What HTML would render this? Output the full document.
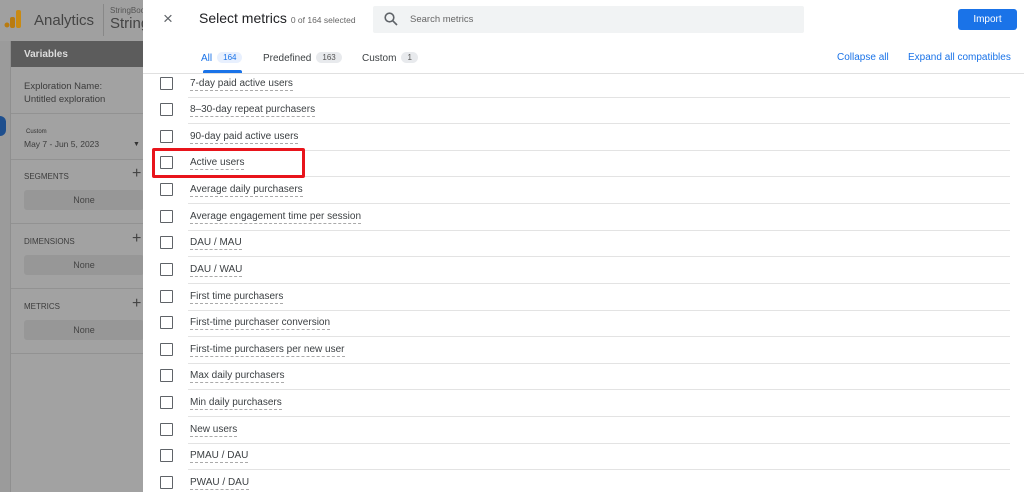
<!DOCTYPE html><html><head><style>
*{box-sizing:border-box;margin:0;padding:0}
html,body{width:1024px;height:492px;overflow:hidden}
body{position:relative;font-family:"Liberation Sans",sans-serif;background:#9b9b9b}
.a{position:absolute;white-space:nowrap}
.side{position:absolute;left:10px;top:41px;width:133px;height:451px;background:#a2a2a2;border-left:1px solid #8f8f8f}
.lt{font-size:9px;color:#3c3c3c}
.none{position:absolute;left:13px;width:120px;height:20px;background:#979797;border-radius:3px;font-size:9px;color:#444;text-align:center;line-height:20px}
.panel{position:absolute;left:143px;top:0;width:881px;height:492px;background:#fff;overflow:hidden}
.row{position:absolute;left:0;width:881px;height:27px}
.cb{position:absolute;left:17px;top:6px;width:13px;height:13px;border:1.5px solid #5f6368;border-radius:1px}
.rt{position:absolute;left:47px;top:6px;font-size:10px;color:#3c4043;border-bottom:1px dashed #aaa;line-height:13px;padding-bottom:0}
.ln{position:absolute;left:45px;right:14px;bottom:0;border-bottom:1px solid #e3e3e3}
.pill{display:inline-block;background:#e8eaed;border-radius:8px;font-size:8px;padding:1px 6px;margin-left:5px;color:#555;vertical-align:1px}
</style></head><body>
<div class="a" style="left:0;top:0;width:143px;height:41px;background:#a0a0a0"></div>
<svg class="a" style="left:3px;top:9px" width="20" height="20"><rect x="13" y="1" width="5" height="18" rx="2" fill="#c98a12"/><rect x="7" y="8" width="5" height="11" rx="2" fill="#b97b10"/><circle cx="4" cy="16" r="2.5" fill="#b97b10"/></svg>
<div class="a" style="left:34px;top:12px;font-size:15px;color:#444">Analytics</div>
<div class="a" style="left:103px;top:4px;height:32px;border-left:1px solid #888"></div>
<div class="a" style="left:110px;top:6px;font-size:8px;color:#555">StringBoo</div>
<div class="a" style="left:110px;top:15px;font-size:15px;color:#444">String</div>
<div class="a" style="left:-6px;top:116px;width:12px;height:20px;border-radius:6px;background:#1e4f8e"></div>
<div class="side">
<div class="a" style="left:0;top:0;width:133px;height:26px;background:#5c5c5c"></div>
<div class="a" style="left:13px;top:8px;font-size:10px;color:#ddd;font-weight:bold">Variables</div>
<div class="a lt" style="left:13px;top:40px;font-size:9.5px">Exploration Name:</div>
<div class="a lt" style="left:13px;top:53px;font-size:9.5px">Untitled exploration</div>
<div class="a" style="left:0;top:72px;width:133px;border-top:1px solid #929292"></div>
<div class="a" style="left:15px;top:88px;font-size:6px;color:#333">Custom</div>
<div class="a lt" style="left:13px;top:98px;font-size:8.5px">May 7 - Jun 5, 2023</div>
<div class="a" style="left:122px;top:100px;font-size:7px;color:#333">▼</div>
<div class="a" style="left:0;top:118px;width:133px;border-top:1px solid #929292"></div>
<div class="a lt" style="left:13px;top:131px;font-size:8px">SEGMENTS</div><div class="a" style="left:121px;top:124px;font-size:16px;color:#444">+</div>
<div class="none" style="top:149px">None</div>
<div class="a" style="left:0;top:182px;width:133px;border-top:1px solid #929292"></div>
<div class="a lt" style="left:13px;top:196px;font-size:8px">DIMENSIONS</div><div class="a" style="left:121px;top:189px;font-size:16px;color:#444">+</div>
<div class="none" style="top:214px">None</div>
<div class="a" style="left:0;top:247px;width:133px;border-top:1px solid #929292"></div>
<div class="a lt" style="left:13px;top:261px;font-size:8px">METRICS</div><div class="a" style="left:121px;top:254px;font-size:16px;color:#444">+</div>
<div class="none" style="top:279px">None</div>
<div class="a" style="left:0;top:312px;width:133px;border-top:1px solid #929292"></div>
</div>
<div class="panel">
<div class="a" style="left:20px;top:9px;font-size:17px;color:#5f6368">×</div>
<div class="a" style="left:56px;top:10px;font-size:14px;color:#202124">Select metrics <span style="font-size:8.5px;color:#666">0 of 164 selected</span></div>
<div class="a" style="left:230px;top:6px;width:431px;height:27px;background:#f1f3f4;border-radius:2px"></div>
<svg class="a" style="left:241px;top:12px" width="14" height="14"><circle cx="5.5" cy="5.5" r="4.3" fill="none" stroke="#5f6368" stroke-width="1.6"/><line x1="8.7" y1="8.7" x2="13" y2="13" stroke="#5f6368" stroke-width="1.6"/></svg>
<div class="a" style="left:267px;top:14px;font-size:9.5px;color:#666">Search metrics</div>
<div class="a" style="left:815px;top:9px;width:59px;height:21px;background:#1a73e8;border-radius:3px;color:#fff;font-size:10px;text-align:center;line-height:21px">Import</div>
<div class="a" style="left:58px;top:52px;font-size:10px;color:#1a73e8">All<span class="pill" style="background:#e8f0fe;color:#1a73e8">164</span></div>
<div class="a" style="left:60px;top:70px;width:39px;height:3px;background:#1a73e8;border-radius:2px 2px 0 0"></div>
<div class="a" style="left:120px;top:52px;font-size:10px;color:#3c4043">Predefined<span class="pill">163</span></div>
<div class="a" style="left:219px;top:52px;font-size:10px;color:#3c4043">Custom<span class="pill">1</span></div>
<div class="a" style="left:694px;top:52px;font-size:10px;color:#1a73e8">Collapse all</div>
<div class="a" style="left:765px;top:52px;font-size:10px;color:#1a73e8">Expand all compatibles</div>
<div class="a" style="left:0;top:73px;width:881px;border-top:1px solid #e0e0e0"></div>
<div class="row" style="top:71px"><div class="cb"></div><div class="rt">7-day paid active users</div><div class="ln"></div></div>
<div class="row" style="top:97px"><div class="cb"></div><div class="rt">8–30-day repeat purchasers</div><div class="ln"></div></div>
<div class="row" style="top:124px"><div class="cb"></div><div class="rt">90-day paid active users</div><div class="ln"></div></div>
<div class="row" style="top:150px"><div class="cb"></div><div class="rt">Active users</div><div class="ln"></div></div>
<div class="row" style="top:177px"><div class="cb"></div><div class="rt">Average daily purchasers</div><div class="ln"></div></div>
<div class="row" style="top:204px"><div class="cb"></div><div class="rt">Average engagement time per session</div><div class="ln"></div></div>
<div class="row" style="top:230px"><div class="cb"></div><div class="rt">DAU / MAU</div><div class="ln"></div></div>
<div class="row" style="top:257px"><div class="cb"></div><div class="rt">DAU / WAU</div><div class="ln"></div></div>
<div class="row" style="top:284px"><div class="cb"></div><div class="rt">First time purchasers</div><div class="ln"></div></div>
<div class="row" style="top:310px"><div class="cb"></div><div class="rt">First-time purchaser conversion</div><div class="ln"></div></div>
<div class="row" style="top:337px"><div class="cb"></div><div class="rt">First-time purchasers per new user</div><div class="ln"></div></div>
<div class="row" style="top:363px"><div class="cb"></div><div class="rt">Max daily purchasers</div><div class="ln"></div></div>
<div class="row" style="top:390px"><div class="cb"></div><div class="rt">Min daily purchasers</div><div class="ln"></div></div>
<div class="row" style="top:417px"><div class="cb"></div><div class="rt">New users</div><div class="ln"></div></div>
<div class="row" style="top:443px"><div class="cb"></div><div class="rt">PMAU / DAU</div><div class="ln"></div></div>
<div class="row" style="top:470px"><div class="cb"></div><div class="rt">PWAU / DAU</div><div class="ln"></div></div>
<div class="a" style="left:9px;top:148px;width:153px;height:30px;border:3px solid #e8141b;border-radius:2px"></div>
</div>
</body></html>
